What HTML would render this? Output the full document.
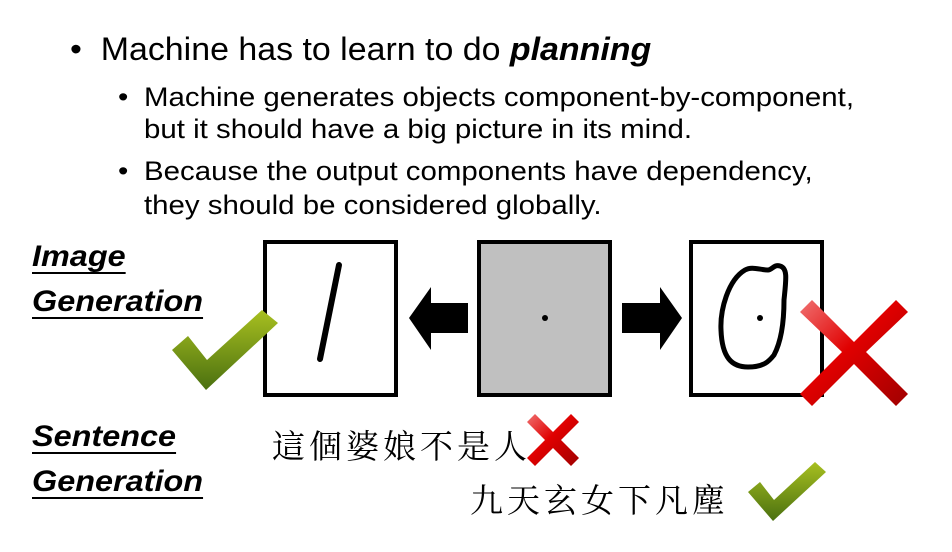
<!DOCTYPE html>
<html><head><meta charset="utf-8"><style>
body{margin:0;width:952px;height:552px;background:#fff;overflow:hidden;position:relative;font-family:"Liberation Sans","Noto Sans CJK TC",sans-serif;color:#000}
.t{position:absolute;white-space:nowrap;transform-origin:0 0}
.l1{font-size:32px;transform:scaleX(1.06)}
.l2{font-size:27px;transform:scaleX(1.09)}
.lab{font-size:30px;font-weight:bold;font-style:italic;text-decoration:underline;text-decoration-thickness:2px;text-underline-offset:6px;transform:scaleX(1.08)}
.zh{font-family:"Noto Serif CJK SC","Noto Serif CJK TC",serif;font-size:33px;letter-spacing:4px}
</style></head><body>
<div class="t l1" style="left:70px;top:31px">•&nbsp; Machine has to learn to do <b><i>planning</i></b></div>
<div class="t l2" style="left:118px;top:82px">•</div>
<div class="t l2" style="left:144px;top:82px">Machine generates objects component-by-component,</div>
<div class="t l2" style="left:144px;top:114px">but it should have a big picture in its mind.</div>
<div class="t l2" style="left:118px;top:156px">•</div>
<div class="t l2" style="left:144px;top:156px">Because the output components have dependency,</div>
<div class="t l2" style="left:144px;top:190px">they should be considered globally.</div>
<div class="t lab" style="left:32px;top:240px">Image</div>
<div class="t lab" style="left:32px;top:285px">Generation</div>
<div class="t lab" style="left:32px;top:420px">Sentence</div>
<div class="t lab" style="left:32px;top:465px">Generation</div>
<div class="t zh" style="left:272px;top:421px">這個婆娘不是人</div>
<div class="t zh" style="left:470px;top:475px">九天玄女下凡塵</div>
<svg width="952" height="552" style="position:absolute;left:0;top:0">
<defs>
<linearGradient id="g" x1="0" y1="0" x2="0" y2="1"><stop offset="0" stop-color="#a8c020"/><stop offset="1" stop-color="#4a7010"/></linearGradient>
<linearGradient id="r" x1="0" y1="0" x2="1" y2="1"><stop offset="0" stop-color="#f07070"/><stop offset="0.45" stop-color="#e00000"/><stop offset="1" stop-color="#a00000"/></linearGradient>
</defs>
<rect x="265" y="242" width="131" height="153" fill="#fff" stroke="#000" stroke-width="4"/>
<path d="M339 265 L320 359" stroke="#000" stroke-width="6" stroke-linecap="round"/>
<rect x="479" y="242" width="131" height="153" fill="#c0c0c0" stroke="#000" stroke-width="4"/>
<circle cx="545" cy="318" r="3" fill="#000"/>
<rect x="691" y="242" width="131" height="153" fill="#fff" stroke="#000" stroke-width="4"/>
<path d="M745 270 C728 280 720 310 721 330 C722 358 732 367 748 367 C765 367 770 360 774 355 C782 340 784 320 784 300 C786 280 788 268 780 266 C774 264 772 270 768 270 C760 270 752 266 745 270 Z" fill="none" stroke="#000" stroke-width="5"/>
<circle cx="760" cy="318" r="3" fill="#000"/>
<path d="M409 318 L431 287 L431 303 L468 303 L468 333 L431 333 L431 350 Z" fill="#000"/>
<path d="M682 318 L660 287 L660 303 L622 303 L622 333 L660 333 L660 350 Z" fill="#000"/>
<path d="M172 350 L188 336 L207 360 L262 310 L278 323 L206 390 Z" fill="url(#g)"/>
<path d="M812 300 L854 342 L896 300 L908 312 L866 352 L908 394 L896 406 L854 364 L812 406 L800 394 L842 352 L800 312 Z" fill="url(#r)"/>
<path d="M535 414 L553 432 L571 414 L579 422 L561 440 L579 458 L571 466 L553 448 L535 466 L527 458 L545 440 L527 422 Z" fill="url(#r)"/>
<path d="M748 492 L760 482 L774 500 L815 462 L826 472 L773 521 Z" fill="url(#g)"/>
</svg>
</body></html>
